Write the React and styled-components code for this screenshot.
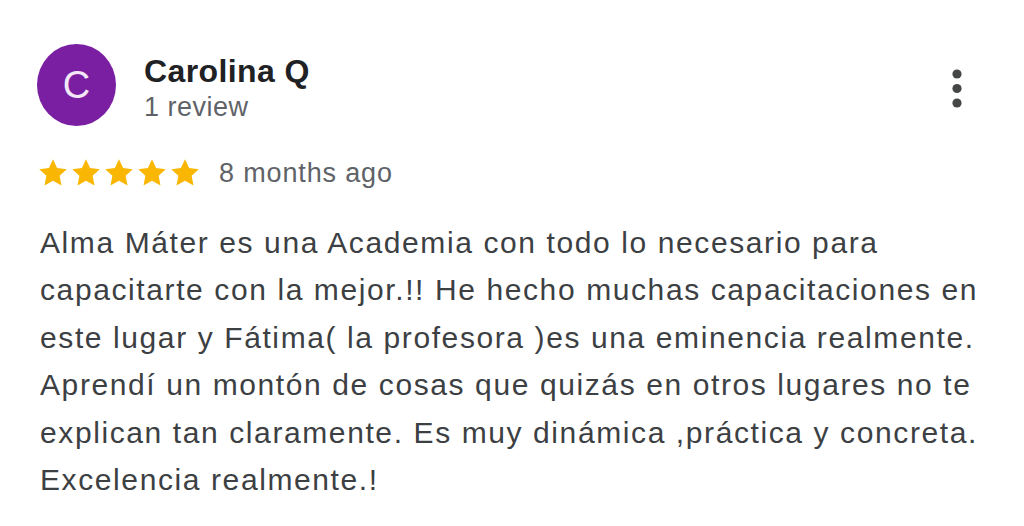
import styled, { createGlobalStyle } from 'styled-components';

const GlobalStyle = createGlobalStyle`
  html, body {
    margin: 0;
    padding: 0;
    background: #ffffff;
  }
  body {
    font-family: "Liberation Sans", Arial, sans-serif;
  }
`;

const Card = styled.div`
  width: 1024px;
  height: 526px;
  box-sizing: border-box;
  padding: 44px 0 0 37px;
  background: #fff;
  overflow: hidden;
`;

const Header = styled.div`
  display: flex;
  align-items: flex-start;
  padding-right: 57px;
`;

const Avatar = styled.div`
  width: 79px;
  height: 82px;
  border-radius: 50%;
  background: #7b1fa2;
  color: #f3e8f7;
  display: flex;
  align-items: center;
  justify-content: center;
  font-size: 38px;
  flex-shrink: 0;
`;

const Who = styled.div`
  display: flex;
  flex-direction: column;
  margin-left: 28px;
  padding-top: 8px;
  flex: 1;
`;

const Name = styled.div`
  font-size: 32px;
  font-weight: 700;
  letter-spacing: 0.4px;
  color: #202124;
  line-height: 38px;
`;

const Sub = styled.div`
  font-size: 27px;
  letter-spacing: 0.5px;
  color: #5f6368;
  line-height: 32px;
  margin-top: 1px;
`;

const MoreButton = styled.button`
  border: 0;
  background: none;
  padding: 0;
  margin-top: 23px;
  width: 20px;
  height: 44px;
  display: flex;
  align-items: center;
  justify-content: center;
`;

const RatingRow = styled.div`
  display: flex;
  align-items: center;
  margin-top: 30px;
  height: 32px;
`;

const Stars = styled.div`
  display: flex;
  gap: 3px;
  margin-left: 1px;
`;

const When = styled.span`
  font-size: 27px;
  letter-spacing: 0.85px;
  color: #5f6368;
  margin-left: 19px;
  position: relative;
  top: 1px;
`;

const Body = styled.p`
  margin: 30.5px 0 0 3px;
  font-size: 30px;
  letter-spacing: 1.6px;
  line-height: 47.5px;
  color: #3c4043;
  white-space: nowrap;
`;

function Star() {
  return (
    <svg width="30" height="29" viewBox="0 0 24 23">
      <path
        d="M12 0.8l3.3 7.1 7.7 0.9-5.7 5.3 1.5 7.7L12 18l-6.8 3.8 1.5-7.7L1 8.8l7.7-0.9z"
        fill="#f9b704"
      />
    </svg>
  );
}

function Kebab() {
  return (
    <svg width="12" height="42" viewBox="0 0 12 42">
      <circle cx="6" cy="6" r="4.6" fill="#444746" />
      <circle cx="6" cy="20.5" r="4.6" fill="#444746" />
      <circle cx="6" cy="35" r="4.6" fill="#444746" />
    </svg>
  );
}

const lines = [
  'Alma Máter es una Academia con todo lo necesario para',
  'capacitarte con la mejor.!! He hecho muchas capacitaciones en',
  'este lugar y Fátima( la profesora )es una eminencia realmente.',
  'Aprendí un montón de cosas que quizás en otros lugares no te',
  'explican tan claramente. Es muy dinámica ,práctica y concreta.',
  'Excelencia realmente.!',
];

export default function App() {
  return (
    <>
      <GlobalStyle />
      <Card>
        <Header>
          <Avatar>C</Avatar>
          <Who>
            <Name>Carolina Q</Name>
            <Sub>1 review</Sub>
          </Who>
          <MoreButton aria-label="More options">
            <Kebab />
          </MoreButton>
        </Header>
        <RatingRow>
          <Stars>
            {[0, 1, 2, 3, 4].map((i) => (
              <Star key={i} />
            ))}
          </Stars>
          <When>8 months ago</When>
        </RatingRow>
        <Body>
          {lines.map((l, i) => (
            <span key={i}>
              {l}
              {i < lines.length - 1 && <br />}
            </span>
          ))}
        </Body>
      </Card>
    </>
  );
}
